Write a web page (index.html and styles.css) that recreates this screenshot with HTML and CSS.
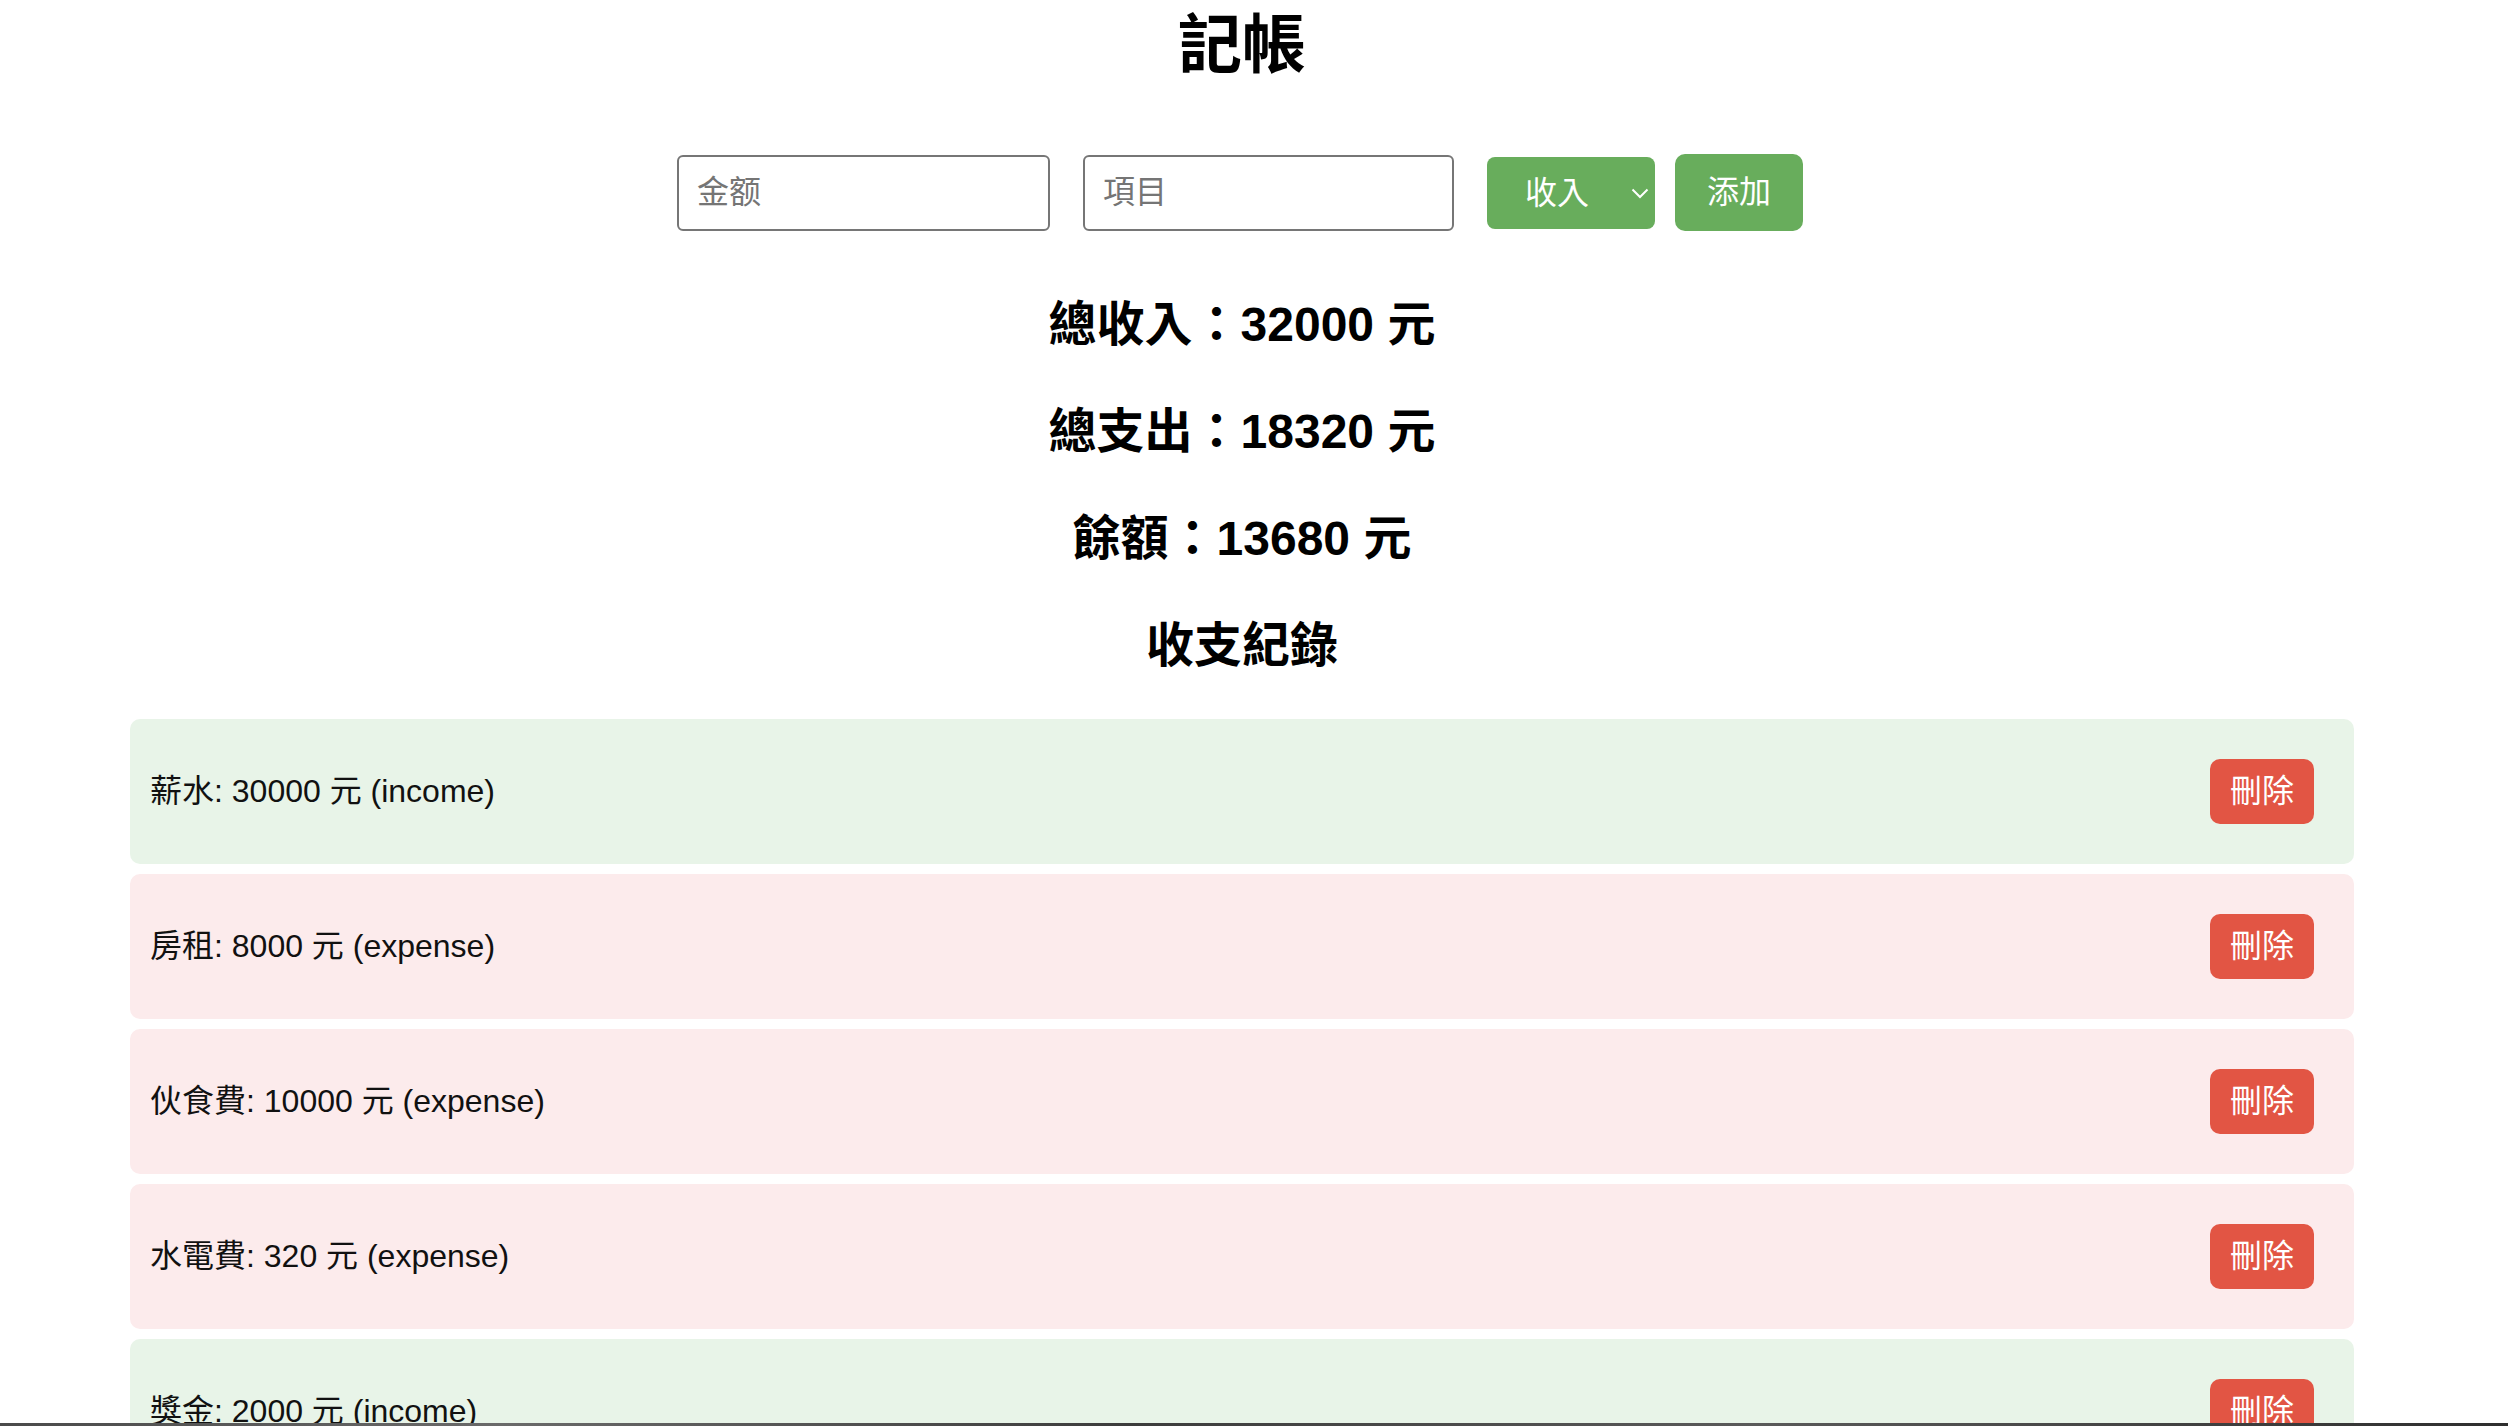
FILE: index.html
```html
<!DOCTYPE html>
<html lang="zh-Hant">
<head>
<meta charset="utf-8">
<title>記帳</title>
<link rel="stylesheet" href="styles.css">
</head>
<body>
<div class="app">
  <h1 class="title">記帳</h1>
  <div class="form">
    <input class="field field-amount" type="number" placeholder="金额">
    <input class="field field-item" type="text" placeholder="項目">
    <div class="select-wrap">
      <select class="type-select">
        <option>收入</option>
        <option>支出</option>
      </select>
      <svg class="chevron" width="18" height="11" viewBox="0 0 18 11"><path d="M1.5 1.5 L9 9 L16.5 1.5" fill="none" stroke="#fff" stroke-width="2"/></svg>
    </div>
    <button class="add-btn">添加</button>
  </div>
  <h2 class="stat">總收入：32000 元</h2>
  <h2 class="stat">總支出：18320 元</h2>
  <h2 class="stat">餘額：13680 元</h2>
  <h2 class="stat">收支紀錄</h2>
  <ul class="records">
    <li class="record income"><span class="record-text">薪水: 30000 元 (income)</span><button class="del-btn">刪除</button></li>
    <li class="record expense"><span class="record-text">房租: 8000 元 (expense)</span><button class="del-btn">刪除</button></li>
    <li class="record expense"><span class="record-text">伙食費: 10000 元 (expense)</span><button class="del-btn">刪除</button></li>
    <li class="record expense"><span class="record-text">水電費: 320 元 (expense)</span><button class="del-btn">刪除</button></li>
    <li class="record income"><span class="record-text">獎金: 2000 元 (income)</span><button class="del-btn">刪除</button></li>
  </ul>
</div>
<div class="dock-edge"></div>
</body>
</html>
```

FILE: styles.css
```css
html, body {
  margin: 0;
  padding: 0;
  background: #fff;
  overflow: hidden;
}
body {
  font-family: "Liberation Sans", "Noto Sans CJK TC", sans-serif;
  color: #000;
}
.app {
  width: 2484px;
  text-align: center;
}
.title {
  margin: 0;
  padding-top: 3px;
  font-size: 64px;
  line-height: 84px;
  font-weight: 700;
}
.form {
  margin-top: 67px;
  margin-bottom: 60px;
  padding-right: 4px;
  display: flex;
  justify-content: center;
  align-items: center;
  height: 77px;
}
.field {
  box-sizing: border-box;
  width: 373px;
  height: 76px;
  border: 2px solid #767676;
  border-radius: 6px;
  padding: 0 18px;
  font-family: "Liberation Sans", "Noto Sans CJK TC", sans-serif;
  font-size: 32px;
  color: #000;
  background: #fff;
  outline: none;
  margin-right: 33px;
  -moz-appearance: textfield;
}
.field-item {
  width: 371px;
}
.field::placeholder {
  color: #757575;
}
.field::-webkit-outer-spin-button,
.field::-webkit-inner-spin-button {
  -webkit-appearance: none;
  margin: 0;
}
.select-wrap {
  position: relative;
  width: 168px;
  height: 72px;
  margin-right: 20px;
}
.type-select {
  -webkit-appearance: none;
  appearance: none;
  box-sizing: border-box;
  width: 168px;
  height: 72px;
  border: none;
  border-radius: 8px;
  background: #68ad5c;
  color: #fff;
  font-family: "Liberation Sans", "Noto Sans CJK TC", sans-serif;
  font-size: 32px;
  padding: 0 0 0 38px;
  outline: none;
}
.chevron {
  position: absolute;
  right: 6px;
  top: 31px;
  pointer-events: none;
}
.add-btn {
  box-sizing: border-box;
  height: 77px;
  padding: 0 32px;
  border: none;
  border-radius: 10px;
  background: #68ad5c;
  color: #fff;
  font-family: "Liberation Sans", "Noto Sans CJK TC", sans-serif;
  font-size: 32px;
  line-height: 45px;
}
.stat {
  margin: 40px 0;
  font-size: 48px;
  line-height: 67px;
  font-weight: 700;
}
.records {
  list-style: none;
  margin: 0 130px;
  padding: 0;
  text-align: left;
}
.record {
  display: flex;
  justify-content: space-between;
  align-items: center;
  padding: 20px;
  margin-bottom: 10px;
  border-radius: 10px;
}
.record.income {
  background: #e8f4e8;
}
.record.expense {
  background: #fcebec;
}
.record-text {
  font-size: 32px;
  line-height: 45px;
  color: #111;
}
.del-btn {
  margin: 20px;
  padding: 10px 20px;
  border: none;
  border-radius: 10px;
  background: #e25544;
  color: #fff;
  font-family: "Liberation Sans", "Noto Sans CJK TC", sans-serif;
  font-size: 32px;
  line-height: 45px;
}
.dock-edge {
  position: fixed;
  left: 0;
  right: 0;
  bottom: 0;
  height: 3px;
  background: linear-gradient(90deg, #4a4a4a, #6a6a6a 20%, #3c3c3c 45%, #5a5a5a 70%, #2e2e2e);
}
```
